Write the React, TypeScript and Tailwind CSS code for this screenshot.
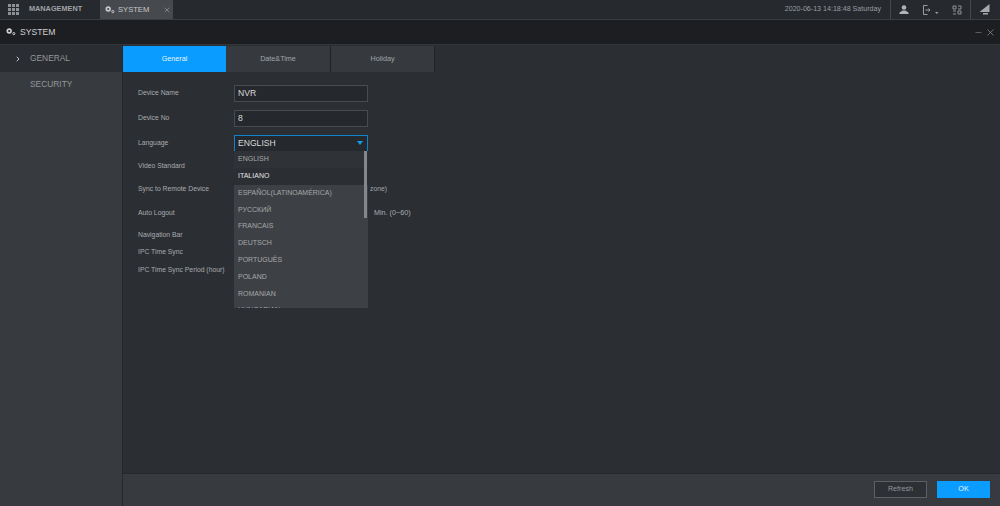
import { X, Minus, ChevronRight } from 'lucide-react'

const languages = [
  'ENGLISH',
  'ITALIANO',
  'ESPAÑOL(LATINOAMÉRICA)',
  'РУССКИЙ',
  'FRANCAIS',
  'DEUTSCH',
  'PORTUGUÊS',
  'POLAND',
  'ROMANIAN',
  'HUNGARIAN',
]

function Gears() {
  return (
    <svg width="10" height="8" viewBox="0 0 10 8" fill="none">
      <circle cx="3.2" cy="3" r="1.9" stroke="currentColor" strokeWidth="1.6" />
      <circle cx="7.8" cy="5.6" r="1.1" stroke="currentColor" strokeWidth="1" />
    </svg>
  )
}

function GridIcon() {
  return (
    <div className="grid grid-cols-3 gap-px w-[11px] h-[11px]">
      {Array.from({ length: 9 }).map((_, i) => (
        <div key={i} className="bg-[#8d9094]" />
      ))}
    </div>
  )
}

export default function App() {
  return (
    <div className="w-[1000px] h-[506px] overflow-hidden flex flex-col bg-[#2b2e33] text-[#a3a6a9] font-['Liberation_Sans',Arial,sans-serif]">
      {/* top bar */}
      <div className="h-[20px] flex items-center bg-[#26292e] border-b border-[#3a3d41] shrink-0">
        <div className="w-[100px] h-full flex items-center pl-2 gap-[10px]">
          <GridIcon />
          <span className="text-[7.3px] font-bold text-[#a0a3a6]">MANAGEMENT</span>
        </div>
        <div className="w-[73px] h-full flex items-center pl-[5px] bg-[#46494d] text-[#c9cacc]">
          <Gears />
          <span className="ml-[3px] text-[7.6px]">SYSTEM</span>
          <X className="ml-[14px] text-[#8a8d90]" size={8} strokeWidth={2.5} />
        </div>
        <div className="ml-auto flex items-center h-full text-[#9b9ea1]">
          <span className="text-[7.1px] mr-[9px]">2020-06-13 14:18:48 Saturday</span>
          <div className="h-full w-[80px] border-l border-[#45484c] flex items-center pl-[8px]">
            <svg width="10" height="9" viewBox="0 0 10 9" fill="#b0b2b5">
              <circle cx="5" cy="2.500" r="2.300" />
              <path d="M0.500 9V7.500L3.500 5.500h3L9.500 7.500V9z" />
            </svg>
            <svg className="ml-[14px]" width="16" height="10" viewBox="0 0 16 10" fill="none" stroke="currentColor">
              <path d="M4.500 .5H.5v9h4M2.500 5h4.500M5.500 3.500L7 5 5.500 6.500" />
              <path d="M12 7h3.500l-1.750 2z" fill="currentColor" stroke="none" />
            </svg>
            <svg className="ml-[13px]" width="10" height="10" viewBox="0 0 10 10" fill="none" stroke="currentColor" strokeWidth="0.9">
              <path d="M1 1h3v3H1zM6 1h3M9 1v3M6 4h3M1 6h3M1 9h3M6 6h3v3H6z" />
            </svg>
          </div>
          <div className="h-full w-[30px] border-l border-[#45484c] pl-[8px] flex items-center">
            <svg width="11" height="11" viewBox="0 0 11 11">
              <path d="M10.500 0v8H.5z" fill="#a7aaad" />
              <path d="M4 9h5v1.500H4z" fill="#a7aaad" />
            </svg>
          </div>
        </div>
      </div>

      {/* title bar */}
      <div className="h-[25px] flex items-center shrink-0 bg-[#1c1e22] border-b border-[#33363a] pl-[6px] pr-[4px] text-[#d0d1d2]">
        <Gears />
        <span className="ml-[4px] text-[8.6px]">SYSTEM</span>
        <Minus className="ml-auto text-[#85878a]" size={9} strokeWidth={1.6} />
        <X className="ml-[2px] text-[#a5a7a9]" size={11} strokeWidth={1.3} />
      </div>

      <div className="flex-1 flex min-h-0">
        {/* sidebar */}
        <div className="w-[123px] shrink-0 bg-[#373a3e] border-r border-[#26282c] text-[8.4px] text-[#94979a]">
          <div className="h-[27px] flex items-center bg-[#2a2d31]">
            <ChevronRight className="ml-[14px] text-[#e0e1e2]" size={8} strokeWidth={2.5} />
            <span className="ml-[8px]">GENERAL</span>
          </div>
          <div className="h-[25px] flex items-center pl-[30px]">SECURITY</div>
        </div>

        {/* main */}
        <div className="flex-1 flex flex-col min-w-0">
          <div className="flex-1 min-h-0">
            <div className="h-[26px] flex text-[7.2px] mt-px">
              <div className="w-[103px] flex items-center justify-center bg-[#0a9cff] text-[#e8f5ff]">General</div>
              <div className="w-[105px] flex items-center justify-center bg-[#363a3e] border-r border-[#1f2125]">Date&amp;Time</div>
              <div className="w-[104px] flex items-center justify-center bg-[#363a3e] border-r border-[#1f2125]">Holiday</div>
            </div>

            <div className="relative pl-[15px] pt-[9px] text-[6.8px] text-[#a9acae]">
              <div className="h-[25px] flex items-center">
                <span className="w-[96px]">Device Name</span>
                <div className="w-[134px] h-[17px] border border-[#484b4f] bg-[#25282c] flex items-center pl-[3px] text-[8.6px] text-[#d8d9da]">NVR</div>
              </div>
              <div className="h-[25px] flex items-center">
                <span className="w-[96px]">Device No</span>
                <div className="w-[134px] h-[17px] border border-[#484b4f] bg-[#25282c] flex items-center pl-[3px] text-[8.6px] text-[#d8d9da]">8</div>
              </div>
              <div className="h-[24px] flex items-center">
                <span className="w-[96px]">Language</span>
                <div className="w-[134px] h-[17px] border border-[#0f84c9] bg-[#25282c] flex items-center pl-[3px] pr-[4px] text-[8.6px] text-[#d8d9da]">
                  ENGLISH
                  <span className="ml-auto w-0 h-0 border-l-[3.5px] border-r-[3.5px] border-t-[4px] border-l-transparent border-r-transparent border-t-[#1a9be6]" />
                </div>
              </div>
              <div className="h-[23px] flex items-center">Video Standard</div>
              <div className="h-[22px] flex items-center">
                <span className="w-[232px]">Sync to Remote Device</span>
                <span className="text-[#a3a6a9]">zone)</span>
              </div>
              <div className="h-[27px] flex items-center">
                <span className="w-[236px]">Auto Logout</span>
                <span className="text-[7.2px]">Min. (0~60)</span>
              </div>
              <div className="h-[16px] flex items-center">Navigation Bar</div>
              <div className="h-[19px] flex items-center">IPC Time Sync</div>
              <div className="h-[16px] flex items-center">IPC Time Sync Period (hour)</div>

              {/* language dropdown */}
              <div className="absolute left-[111px] top-[79px] w-[134px] h-[157px] overflow-hidden bg-[#3d4044] text-[7px] text-[#a6a8aa]">
                {languages.map((lang) => (
                  <div
                    key={lang}
                    className={
                      lang === 'ITALIANO'
                        ? 'h-[16.8px] flex items-center pl-[4px] bg-[#2b2e33] text-[#e2e3e4]'
                        : lang === 'ENGLISH'
                          ? 'h-[16.8px] flex items-center pl-[4px] bg-[#2f3236]'
                          : 'h-[16.8px] flex items-center pl-[4px]'
                    }
                  >
                    {lang}
                  </div>
                ))}
                <div className="absolute right-px top-0 w-[3px] h-[67px] bg-[#85888b]" />
              </div>
            </div>
          </div>

          {/* footer */}
          <div className="h-[33px] shrink-0 bg-[#373a3e] border-t border-[#26282c] flex items-center justify-end pr-[10px] pb-px text-[7.2px]">
            <div className="w-[53px] h-[17px] border border-[#5c5f63] bg-[#2d3035] flex items-center justify-center text-[#94979a]">Refresh</div>
            <div className="ml-[10px] w-[53px] h-[17px] bg-[#0a9cff] flex items-center justify-center text-[#e8f5ff]">OK</div>
          </div>
        </div>
      </div>
    </div>
  )
}
